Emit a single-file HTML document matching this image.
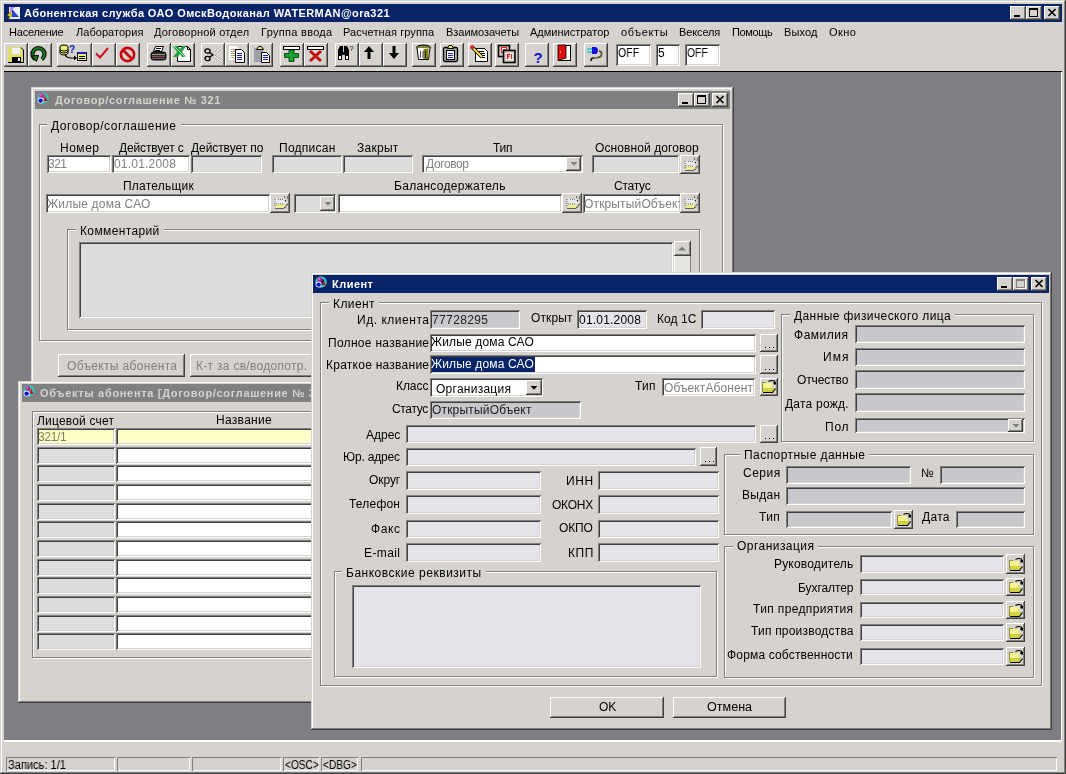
<!DOCTYPE html>
<html><head><meta charset="utf-8"><style>
html,body{margin:0;padding:0;}
body{width:1066px;height:774px;position:relative;overflow:hidden;background:#d6d3ce;font-family:"Liberation Sans",sans-serif;}
body>div,body>svg,body>span{position:absolute;}
.t{white-space:pre;display:block;-webkit-font-smoothing:antialiased;will-change:transform;}
svg{overflow:visible;}
</style></head><body>
<div style="left:0px;top:0px;width:1066px;height:774px;background:#d6d3ce;box-shadow:inset -1px -1px #404040,inset 1px 1px #d6d3ce,inset -2px -2px #808080,inset 2px 2px #ffffff;"></div>
<div style="left:4px;top:4px;width:1058px;height:18px;background:#0a246a;"></div>
<svg style="left:6px;top:6px" width="14" height="14" viewBox="0 0 14 14"><rect x="3" y="1" width="11" height="12" fill="#e8f0ff"/><path d="M6 3 L13 11 H6 Z" fill="#2040e0"/><path d="M4 1 L9 1 L4 6 Z" fill="#c080ff"/><path d="M4 6 L1 10 H4 L2 14 L7 8 H4 L6 5 Z" fill="#f0e020" stroke="#604000" stroke-width="0.5"/></svg>
<span class="t " style="left:23.50px;top:7px;font-size:11px;line-height:12px;color:#fff;letter-spacing:0.406px;font-weight:bold;">Абонентская служба ОАО ОмскВодоканал WATERMAN@ora321</span>
<div style="left:1010px;top:6px;width:16px;height:14px;background:#d6d3ce;box-shadow:inset -1px -1px #404040,inset 1px 1px #ffffff,inset -2px -2px #808080,inset 2px 2px #d6d3ce;"></div>
<div style="left:1014px;top:15px;width:6px;height:2px;background:#000;"></div>
<div style="left:1026px;top:6px;width:16px;height:14px;background:#d6d3ce;box-shadow:inset -1px -1px #404040,inset 1px 1px #ffffff,inset -2px -2px #808080,inset 2px 2px #d6d3ce;"></div>
<div style="left:1029px;top:8px;width:9px;height:9px;border:1px solid #000;border-top-width:2px;box-sizing:border-box;"></div>
<div style="left:1044px;top:6px;width:16px;height:14px;background:#d6d3ce;box-shadow:inset -1px -1px #404040,inset 1px 1px #ffffff,inset -2px -2px #808080,inset 2px 2px #d6d3ce;"></div>
<svg style="left:1048px;top:9px" width="8" height="7" viewBox="0 0 8 7"><path d="M0.5 0 L7.5 7 M7.5 0 L0.5 7" stroke="#000" stroke-width="1.6"/></svg>
<span class="t " style="left:8.80px;top:26px;font-size:11px;line-height:12px;color:#000;letter-spacing:-0.190px;">Население</span>
<span class="t " style="left:75.50px;top:26px;font-size:11px;line-height:12px;color:#000;letter-spacing:0.037px;">Лаборатория</span>
<span class="t " style="left:154.30px;top:26px;font-size:11px;line-height:12px;color:#000;letter-spacing:0.203px;">Договорной отдел</span>
<span class="t " style="left:260.80px;top:26px;font-size:11px;line-height:12px;color:#000;letter-spacing:0.298px;">Группа ввода</span>
<span class="t " style="left:342.90px;top:26px;font-size:11px;line-height:12px;color:#000;letter-spacing:0.095px;">Расчетная группа</span>
<span class="t " style="left:445.70px;top:26px;font-size:11px;line-height:12px;color:#000;letter-spacing:-0.036px;">Взаимозачеты</span>
<span class="t " style="left:530.30px;top:26px;font-size:11px;line-height:12px;color:#000;letter-spacing:0.001px;">Администратор</span>
<span class="t " style="left:621.20px;top:26px;font-size:11px;line-height:12px;color:#000;letter-spacing:0.610px;">объекты</span>
<span class="t " style="left:679.00px;top:26px;font-size:11px;line-height:12px;color:#000;letter-spacing:-0.124px;">Векселя</span>
<span class="t " style="left:731.90px;top:26px;font-size:11px;line-height:12px;color:#000;letter-spacing:-0.340px;">Помощь</span>
<span class="t " style="left:783.90px;top:26px;font-size:11px;line-height:12px;color:#000;letter-spacing:0.116px;">Выход</span>
<span class="t " style="left:828.50px;top:26px;font-size:11px;line-height:12px;color:#000;letter-spacing:0.474px;">Окно</span>
<div style="left:4px;top:43px;width:24px;height:24px;background:#d6d3ce;box-shadow:inset -1px -1px #404040,inset 1px 1px #ffffff,inset -2px -2px #808080,inset 2px 2px #d6d3ce;"></div>
<div style="left:28px;top:43px;width:24px;height:24px;background:#d6d3ce;box-shadow:inset -1px -1px #404040,inset 1px 1px #ffffff,inset -2px -2px #808080,inset 2px 2px #d6d3ce;"></div>
<div style="left:57px;top:43px;width:35px;height:24px;background:#d6d3ce;box-shadow:inset -1px -1px #404040,inset 1px 1px #ffffff,inset -2px -2px #808080,inset 2px 2px #d6d3ce;"></div>
<div style="left:92px;top:43px;width:24px;height:24px;background:#d6d3ce;box-shadow:inset -1px -1px #404040,inset 1px 1px #ffffff,inset -2px -2px #808080,inset 2px 2px #d6d3ce;"></div>
<div style="left:116px;top:43px;width:24px;height:24px;background:#d6d3ce;box-shadow:inset -1px -1px #404040,inset 1px 1px #ffffff,inset -2px -2px #808080,inset 2px 2px #d6d3ce;"></div>
<div style="left:147px;top:43px;width:24px;height:24px;background:#d6d3ce;box-shadow:inset -1px -1px #404040,inset 1px 1px #ffffff,inset -2px -2px #808080,inset 2px 2px #d6d3ce;"></div>
<div style="left:171px;top:43px;width:24px;height:24px;background:#d6d3ce;box-shadow:inset -1px -1px #404040,inset 1px 1px #ffffff,inset -2px -2px #808080,inset 2px 2px #d6d3ce;"></div>
<div style="left:201px;top:43px;width:24px;height:24px;background:#d6d3ce;box-shadow:inset -1px -1px #404040,inset 1px 1px #ffffff,inset -2px -2px #808080,inset 2px 2px #d6d3ce;"></div>
<div style="left:225px;top:43px;width:24px;height:24px;background:#d6d3ce;box-shadow:inset -1px -1px #404040,inset 1px 1px #ffffff,inset -2px -2px #808080,inset 2px 2px #d6d3ce;"></div>
<div style="left:249px;top:43px;width:24px;height:24px;background:#d6d3ce;box-shadow:inset -1px -1px #404040,inset 1px 1px #ffffff,inset -2px -2px #808080,inset 2px 2px #d6d3ce;"></div>
<div style="left:280px;top:43px;width:24px;height:24px;background:#d6d3ce;box-shadow:inset -1px -1px #404040,inset 1px 1px #ffffff,inset -2px -2px #808080,inset 2px 2px #d6d3ce;"></div>
<div style="left:304px;top:43px;width:24px;height:24px;background:#d6d3ce;box-shadow:inset -1px -1px #404040,inset 1px 1px #ffffff,inset -2px -2px #808080,inset 2px 2px #d6d3ce;"></div>
<div style="left:335px;top:43px;width:24px;height:24px;background:#d6d3ce;box-shadow:inset -1px -1px #404040,inset 1px 1px #ffffff,inset -2px -2px #808080,inset 2px 2px #d6d3ce;"></div>
<div style="left:359px;top:43px;width:24px;height:24px;background:#d6d3ce;box-shadow:inset -1px -1px #404040,inset 1px 1px #ffffff,inset -2px -2px #808080,inset 2px 2px #d6d3ce;"></div>
<div style="left:383px;top:43px;width:24px;height:24px;background:#d6d3ce;box-shadow:inset -1px -1px #404040,inset 1px 1px #ffffff,inset -2px -2px #808080,inset 2px 2px #d6d3ce;"></div>
<div style="left:412px;top:43px;width:24px;height:24px;background:#d6d3ce;box-shadow:inset -1px -1px #404040,inset 1px 1px #ffffff,inset -2px -2px #808080,inset 2px 2px #d6d3ce;"></div>
<div style="left:440px;top:43px;width:24px;height:24px;background:#d6d3ce;box-shadow:inset -1px -1px #404040,inset 1px 1px #ffffff,inset -2px -2px #808080,inset 2px 2px #d6d3ce;"></div>
<div style="left:468px;top:43px;width:24px;height:24px;background:#d6d3ce;box-shadow:inset -1px -1px #404040,inset 1px 1px #ffffff,inset -2px -2px #808080,inset 2px 2px #d6d3ce;"></div>
<div style="left:495px;top:43px;width:24px;height:24px;background:#d6d3ce;box-shadow:inset -1px -1px #404040,inset 1px 1px #ffffff,inset -2px -2px #808080,inset 2px 2px #d6d3ce;"></div>
<div style="left:525px;top:43px;width:24px;height:24px;background:#d6d3ce;box-shadow:inset -1px -1px #404040,inset 1px 1px #ffffff,inset -2px -2px #808080,inset 2px 2px #d6d3ce;"></div>
<div style="left:553px;top:43px;width:24px;height:24px;background:#d6d3ce;box-shadow:inset -1px -1px #404040,inset 1px 1px #ffffff,inset -2px -2px #808080,inset 2px 2px #d6d3ce;"></div>
<div style="left:584px;top:43px;width:24px;height:24px;background:#d6d3ce;box-shadow:inset -1px -1px #404040,inset 1px 1px #ffffff,inset -2px -2px #808080,inset 2px 2px #d6d3ce;"></div>
<svg style="left:8px;top:47px" width="16" height="16" viewBox="0 0 16 16"><path d="M0 0 H13 L16 3 V16 H0 Z" fill="#dede6a"/><path d="M13 0.5 L15.5 3 V15.5 H0" fill="none" stroke="#000" stroke-width="1"/><rect x="4" y="1" width="8" height="6" fill="#f4f0f8"/><rect x="4" y="10" width="9" height="6" fill="#000"/><rect x="10" y="11" width="2" height="3" fill="#fff"/></svg>
<svg style="left:30px;top:45px" width="17" height="17" viewBox="0 0 17 17"><path d="M5.2 14.2 A6 6 0 1 1 11.8 14.2" fill="none" stroke="#000" stroke-width="4.2"/><path d="M5.2 14.2 A6 6 0 1 1 11.8 14.2" fill="none" stroke="#1a7a1a" stroke-width="2.2"/><path d="M1.5 11 L6.5 16.5 L8.5 10.5 Z" fill="#1a7a1a" stroke="#000" stroke-width="1"/></svg>
<svg style="left:59px;top:44px" width="30" height="18" viewBox="0 0 30 18"><ellipse cx="5" cy="3" rx="4" ry="2" fill="#f0f070" stroke="#000"/><path d="M1 3 V9 A4 2 0 0 0 9 9 V3" fill="#f0f070" stroke="#000"/><path d="M1 5 A4 2 0 0 0 9 5 M1 7 A4 2 0 0 0 9 7" fill="none" stroke="#000"/><text x="10" y="9" font-size="10" font-family="Liberation Sans" font-weight="bold" fill="#2020c0">?</text><path d="M6 11 Q8 14 12 14 H16" fill="none" stroke="#000" stroke-width="1.2"/><path d="M15 11.5 L18 14 L15 16.5 Z" fill="#000"/><rect x="18.5" y="8.5" width="9" height="8" fill="#f0f070" stroke="#000"/><rect x="18.5" y="8" width="9" height="2" fill="#2020c0"/><path d="M20 12.5 H26 M20 14.5 H26" stroke="#000"/></svg>
<svg style="left:95px;top:47px" width="14" height="12" viewBox="0 0 14 12"><path d="M1 6.5 L5 10.5 L13 1" fill="none" stroke="#d01020" stroke-width="2"/></svg>
<svg style="left:119px;top:46px" width="17" height="17" viewBox="0 0 17 17"><circle cx="8.5" cy="8.5" r="6.6" fill="none" stroke="#c80010" stroke-width="2.6"/><path d="M4 4 L13 13" stroke="#c80010" stroke-width="2.6"/></svg>
<svg style="left:150px;top:46px" width="17" height="16" viewBox="0 0 17 16"><path d="M5.5 0.5 H13.5 L11.5 5.5 H3.5 Z" fill="#fff" stroke="#000"/><path d="M6 2.5 H11 M5 4.5 H10" stroke="#000" stroke-width="1"/><rect x="1" y="6" width="15" height="8" rx="2.5" fill="#303030" stroke="#000" stroke-width="1"/><path d="M2 8.5 H15" stroke="#909090" stroke-width="1"/><path d="M2 10.5 H15" stroke="#a04040" stroke-width="1"/><path d="M2 12.5 H15" stroke="#606060" stroke-width="1"/></svg>
<svg style="left:173px;top:45px" width="19" height="18" viewBox="0 0 19 18"><path d="M4.5 1.5 H14.5 L17.5 4.5 V16.5 H4.5 Z" fill="#fff" stroke="#000"/><path d="M14.5 1.5 V4.5 H17.5" fill="none" stroke="#000"/><path d="M0 1 H5 L7 4 L9 1 H13 L9 7 L13 12 H9 L7 9 L5 12 H0 L4 7 Z" fill="#22a040"/><path d="M1 1 L12 12" stroke="#c8f0c8" stroke-width="0.8"/></svg>
<svg style="left:203px;top:46px" width="20" height="17" viewBox="0 0 20 17"><path d="M10 9 L19 1 M10 9 L19 16" stroke="#808080" stroke-width="2.2"/><path d="M10 9 L19 1 M10 9 L19 16" stroke="#fff" stroke-width="1.2"/><ellipse cx="4.5" cy="5" rx="2.6" ry="2.2" fill="#d4d0c8" stroke="#000" stroke-width="1.3"/><ellipse cx="4.5" cy="12.5" rx="2.6" ry="2.2" fill="#d4d0c8" stroke="#000" stroke-width="1.3"/><path d="M6.5 6.5 L10 9 L6.5 11" fill="none" stroke="#000" stroke-width="1.3"/></svg>
<svg style="left:228px;top:46px" width="18" height="18" viewBox="0 0 18 18"><path d="M1 0 H8 L11 3 V14 H1 Z" fill="#fff"/><path d="M3 3.5 H8 M3 5.5 H8 M3 7.5 H8 M3 9.5 H8 M3 11.5 H6" stroke="#9a9a88" stroke-width="1"/><path d="M7.5 3.5 H13.5 L16.5 6.5 V16.5 H7.5 Z" fill="#fff" stroke="#000"/><path d="M9 7.5 H14 M9 9.5 H14 M9 11.5 H14 M9 13.5 H14" stroke="#1818b0" stroke-width="1"/></svg>
<svg style="left:253px;top:45px" width="18" height="19" viewBox="0 0 18 19"><rect x="1" y="3" width="9" height="14" fill="#a0a0a8"/><path d="M3.5 4.5 L5.5 1.5 H8.5 L10.5 4.5 Z" fill="#f0f070" stroke="#000" stroke-width="1"/><path d="M8.5 7.5 H13.5 L16.5 10.5 V17.5 H8.5 Z" fill="#fff" stroke="#000"/><path d="M10 10.5 H15 M10 12.5 H15 M10 14.5 H15" stroke="#1818b0" stroke-width="1"/></svg>
<svg style="left:283px;top:46px" width="17" height="16" viewBox="0 0 17 16"><rect x="0.5" y="0.5" width="16" height="3" fill="#fff" stroke="#000"/><path d="M6 4 H11 V7.5 H15.5 V11.5 H11 V15.5 H6 V11.5 H1.5 V7.5 H6 Z" fill="#18a030" stroke="#003000" stroke-width="0.8"/></svg>
<svg style="left:307px;top:46px" width="17" height="16" viewBox="0 0 17 16"><rect x="0.5" y="0.5" width="16" height="3" fill="#fff" stroke="#000"/><path d="M3 5 L14 15 M14 5 L3 15" stroke="#c01010" stroke-width="3"/></svg>
<svg style="left:337px;top:45px" width="18" height="16" viewBox="0 0 18 16"><path d="M1 5 L3 1 H6 V7 H7 V1 H10 L12 5 V15 H8 V10 H5 V15 H1 Z" fill="#000"/><rect x="2" y="11" width="2" height="3" fill="#fff"/><rect x="9" y="11" width="2" height="3" fill="#fff"/><text x="12.5" y="6" font-size="7" font-family="Liberation Sans" fill="#000">?</text></svg>
<svg style="left:363px;top:46px" width="12" height="14" viewBox="0 0 12 14"><path d="M6 0 L11 6 H7.5 V13 H4.5 V6 H1 Z" fill="#000"/></svg>
<svg style="left:388px;top:46px" width="12" height="14" viewBox="0 0 12 14"><path d="M6 13 L11 7 H7.5 V0 H4.5 V7 H1 Z" fill="#000"/></svg>
<svg style="left:415px;top:44px" width="17" height="17" viewBox="0 0 17 17"><ellipse cx="8.5" cy="3.5" rx="7" ry="2.5" fill="#808040" stroke="#000"/><path d="M2 4 L3.5 15.5 H13.5 L15 4" fill="#fff" stroke="#000"/><path d="M8.5 5 L13.5 4.5 L13 15 H8.5 Z" fill="#808000"/><path d="M5.5 7 V14 M8 7 V14 M10.5 7 V14" stroke="#000" stroke-width="0.7"/></svg>
<svg style="left:443px;top:45px" width="16" height="17" viewBox="0 0 16 17"><rect x="0.5" y="2.5" width="14" height="14" rx="1.5" fill="#a8a8a8" stroke="#000" stroke-width="1.3"/><rect x="3.5" y="5.5" width="8" height="9" fill="#fff" stroke="#000" stroke-width="1"/><path d="M4.5 3.5 L6 0.5 H9 L10.5 3.5 Z" fill="#f0f070" stroke="#000" stroke-width="1"/><path d="M5 8.5 H10 M5 10.5 H10 M5 12.5 H10" stroke="#2020c0" stroke-width="1"/></svg>
<svg style="left:470px;top:45px" width="19" height="18" viewBox="0 0 19 18"><path d="M5.5 3.5 H14.5 L17.5 6.5 V16.5 H5.5 Z" fill="#fff" stroke="#000"/><path d="M9 6.5 H14 M9 8.5 H15 M10 10.5 H15 M11 12.5 H15" stroke="#000" stroke-width="1"/><path d="M2 2 L12 12" stroke="#000" stroke-width="3.6"/><path d="M2 2 L12 12" stroke="#f0e040" stroke-width="2"/><circle cx="2.2" cy="2.2" r="2" fill="#d02020"/></svg>
<svg style="left:498px;top:45px" width="18" height="18" viewBox="0 0 18 18"><rect x="0.5" y="0.5" width="11" height="11" fill="#d4d0c8" stroke="#000" stroke-width="1.6"/><rect x="3" y="2" width="6" height="6" fill="#e02020"/><path d="M4.5 3 V7 M4.5 3.5 H8 M4.5 5.5 H7" stroke="#fff" stroke-width="1"/><rect x="5.5" y="5.5" width="11.5" height="12" fill="#d4d0c8" stroke="#000" stroke-width="1.6"/><rect x="8" y="8" width="7" height="7" fill="#f4f4f4"/><path d="M9.5 9 V14 M9.5 9.5 H12 M9.5 11.5 H11.5 M13.5 9 V14" stroke="#d02020" stroke-width="1.3"/></svg>
<svg style="left:533px;top:49px" width="12" height="15" viewBox="0 0 12 15"><text x="0.5" y="13.5" font-size="15" font-weight="bold" font-family="Liberation Sans" fill="#1010d0">?</text></svg>
<svg style="left:556px;top:45px" width="16" height="16" viewBox="0 0 16 16"><rect x="3.5" y="0.5" width="11" height="15" fill="#fff" stroke="#000"/><path d="M2 0 H10 V13 L2 15.5 Z" fill="#e01010" stroke="#000" stroke-width="0.8"/><rect x="4" y="6" width="1" height="2" fill="#ff8080"/></svg>
<svg style="left:587px;top:45px" width="18" height="17" viewBox="0 0 18 17"><path d="M0 4 H5 M0 7 H5" stroke="#20c0d0" stroke-width="1.4"/><path d="M5 2 H9 A4 4 0 0 1 9 9 H5 Z" fill="#1010e0"/><path d="M12 6 Q16 7 14 11 Q12 13 6 13 Q4 13 4 16" fill="none" stroke="#000" stroke-width="1.6"/><path d="M12 6 Q16 7 14 11 Q12 13 6 13" fill="none" stroke="#e0d040" stroke-width="0.6"/></svg>
<div style="left:616px;top:44px;width:35px;height:22px;background:#ffffff;box-shadow:inset 1px 1px #808080,inset -1px -1px #ffffff,inset 2px 2px #404040,inset -2px -2px #d6d3ce;"></div>
<div style="left:656px;top:44px;width:24px;height:22px;background:#ffffff;box-shadow:inset 1px 1px #808080,inset -1px -1px #ffffff,inset 2px 2px #404040,inset -2px -2px #d6d3ce;"></div>
<div style="left:685px;top:44px;width:35px;height:22px;background:#ffffff;box-shadow:inset 1px 1px #808080,inset -1px -1px #ffffff,inset 2px 2px #404040,inset -2px -2px #d6d3ce;"></div>
<span class="t " style="left:617.70px;top:46px;font-size:12px;line-height:14px;color:#000;transform:scaleX(0.8789);transform-origin:0 0;">OFF</span>
<span class="t " style="left:658.40px;top:46px;font-size:12px;line-height:14px;color:#000;">5</span>
<span class="t " style="left:686.80px;top:46px;font-size:12px;line-height:14px;color:#000;transform:scaleX(0.8571);transform-origin:0 0;">OFF</span>
<div style="left:4px;top:71px;width:1058px;height:1px;background:#000;"></div>
<div style="left:4px;top:72px;width:1057px;height:668px;background:#807e83;"></div>
<div style="left:1061px;top:72px;width:1px;height:668px;background:#fff;"></div>
<div style="left:4px;top:740px;width:1058px;height:2px;background:#fff;"></div>
<div style="left:31px;top:87px;width:703px;height:300px;background:#d6d3ce;box-shadow:inset -1px -1px #404040,inset 1px 1px #d6d3ce,inset -2px -2px #808080,inset 2px 2px #ffffff;"></div>
<div style="left:35px;top:91px;width:695px;height:18px;background:#808080;"></div>
<svg style="left:37px;top:92px" width="12" height="12" viewBox="0 0 12 12"><circle cx="6" cy="6" r="4.6" fill="none" stroke="#38c4b4" stroke-width="2.4"/><circle cx="4.8" cy="3.6" r="2.4" fill="#c0209c"/><circle cx="4.2" cy="3" r="0.8" fill="#ffb0ff"/><path d="M8.2 4.5 L10.8 9 H7.2 Z" fill="#c00c20"/><circle cx="3.6" cy="8.6" r="3" fill="#e8f0ff"/><circle cx="3.6" cy="8.6" r="2.2" fill="#1010c8"/></svg>
<span class="t " style="left:55.00px;top:94px;font-size:11px;line-height:12px;color:#d6d3ce;letter-spacing:0.638px;font-weight:bold;">Договор/соглашение № 321</span>
<div style="left:678px;top:93px;width:16px;height:14px;background:#d6d3ce;box-shadow:inset -1px -1px #404040,inset 1px 1px #ffffff,inset -2px -2px #808080,inset 2px 2px #d6d3ce;"></div>
<div style="left:682px;top:102px;width:6px;height:2px;background:#000;"></div>
<div style="left:694px;top:93px;width:16px;height:14px;background:#d6d3ce;box-shadow:inset -1px -1px #404040,inset 1px 1px #ffffff,inset -2px -2px #808080,inset 2px 2px #d6d3ce;"></div>
<div style="left:697px;top:95px;width:9px;height:9px;border:1px solid #000;border-top-width:2px;box-sizing:border-box;"></div>
<div style="left:712px;top:93px;width:16px;height:14px;background:#d6d3ce;box-shadow:inset -1px -1px #404040,inset 1px 1px #ffffff,inset -2px -2px #808080,inset 2px 2px #d6d3ce;"></div>
<svg style="left:716px;top:96px" width="8" height="7" viewBox="0 0 8 7"><path d="M0.5 0 L7.5 7 M7.5 0 L0.5 7" stroke="#000" stroke-width="1.6"/></svg>
<div style="left:40px;top:125px;width:684px;height:217px;border:1px solid #ffffff;box-sizing:border-box;"></div>
<div style="left:39px;top:124px;width:684px;height:217px;border:1px solid #808080;box-sizing:border-box;"></div>
<span class="t " style="left:51.00px;top:119px;font-size:12px;line-height:14px;color:#000;letter-spacing:0.558px;background:#d6d3ce;padding:0 4px;margin-left:-4px;">Договор/соглашение</span>
<span class="t " style="left:59.90px;top:141px;font-size:12px;line-height:14px;color:#000;letter-spacing:0.516px;">Номер</span>
<span class="t " style="left:118.80px;top:141px;font-size:12px;line-height:14px;color:#000;letter-spacing:-0.128px;">Действует с</span>
<span class="t " style="left:190.50px;top:141px;font-size:12px;line-height:14px;color:#000;letter-spacing:-0.077px;">Действует по</span>
<span class="t " style="left:279.00px;top:141px;font-size:12px;line-height:14px;color:#000;letter-spacing:0.267px;">Подписан</span>
<span class="t " style="left:357.35px;top:141px;font-size:12px;line-height:14px;color:#000;letter-spacing:0.266px;">Закрыт</span>
<span class="t " style="left:492.80px;top:141px;font-size:12px;line-height:14px;color:#000;letter-spacing:-0.300px;">Тип</span>
<span class="t " style="left:595.15px;top:141px;font-size:12px;line-height:14px;color:#000;letter-spacing:0.089px;">Основной договор</span>
<div style="left:47px;top:155px;width:64px;height:18px;background:#ffffff;box-shadow:inset 1px 1px #808080,inset -1px -1px #ffffff,inset 2px 2px #404040,inset -2px -2px #d6d3ce;"></div>
<span class="t " style="left:48.20px;top:157px;font-size:12px;line-height:14px;color:#808080;letter-spacing:-0.508px;">321</span>
<div style="left:112px;top:155px;width:78px;height:18px;background:#ffffff;box-shadow:inset 1px 1px #808080,inset -1px -1px #ffffff,inset 2px 2px #404040,inset -2px -2px #d6d3ce;"></div>
<span class="t " style="left:114.10px;top:157px;font-size:12px;line-height:14px;color:#808080;letter-spacing:0.197px;">01.01.2008</span>
<div style="left:191px;top:155px;width:71px;height:18px;background:#dedddd;box-shadow:inset 1px 1px #808080,inset -1px -1px #ffffff,inset 2px 2px #404040,inset -2px -2px #d6d3ce;"></div>
<div style="left:272px;top:155px;width:70px;height:18px;background:#dedddd;box-shadow:inset 1px 1px #808080,inset -1px -1px #ffffff,inset 2px 2px #404040,inset -2px -2px #d6d3ce;"></div>
<div style="left:343px;top:155px;width:70px;height:18px;background:#dedddd;box-shadow:inset 1px 1px #808080,inset -1px -1px #ffffff,inset 2px 2px #404040,inset -2px -2px #d6d3ce;"></div>
<div style="left:422px;top:155px;width:161px;height:18px;background:#ffffff;box-shadow:inset 1px 1px #808080,inset -1px -1px #ffffff,inset 2px 2px #404040,inset -2px -2px #d6d3ce;"></div>
<span class="t " style="left:425.80px;top:157px;font-size:12px;line-height:14px;color:#808080;letter-spacing:-0.383px;">Договор</span>
<div style="left:566px;top:157px;width:15px;height:14px;background:#d6d3ce;box-shadow:inset -1px -1px #404040,inset 1px 1px #ffffff,inset -2px -2px #808080,inset 2px 2px #d6d3ce;"></div>
<svg style="left:569.5px;top:162.0px" width="8" height="4" viewBox="0 0 8 4"><path d="M0.5 0 H7.5 L4 3.8 Z" fill="#808080"/></svg>
<div style="left:592px;top:155px;width:87px;height:18px;background:#dedddd;box-shadow:inset 1px 1px #808080,inset -1px -1px #ffffff,inset 2px 2px #404040,inset -2px -2px #d6d3ce;"></div>
<div style="left:680px;top:155px;width:20px;height:19px;background:#d6d3ce;box-shadow:inset -1px -1px #404040,inset 1px 1px #ffffff,inset -2px -2px #808080,inset 2px 2px #d6d3ce;"></div>
<svg style="left:684px;top:158px" width="14" height="13" viewBox="0 0 14 13"><rect x="1" y="3" width="10" height="5" fill="#e8e6f0"/><path d="M2 8 H12 L10 12 H2 Z" fill="#ecec90"/><path d="M1.5 12.5 H10" stroke="#000" stroke-width="1.1" stroke-dasharray="1.1 0.9"/><path d="M10.5 12 L13.5 8" stroke="#000" stroke-width="1.1" stroke-dasharray="1.1 0.9"/><path d="M1 3 V11 M2 8 H9" stroke="#707060" stroke-width="1" stroke-dasharray="1 1"/><path d="M4 3.5 H9" stroke="#707080" stroke-width="1" stroke-dasharray="1 1"/><path d="M10 1 H14 M11 5 L13.5 2.5" stroke="#000" stroke-width="1.1" stroke-dasharray="1.1 2"/></svg>
<span class="t " style="left:122.65px;top:179px;font-size:12px;line-height:14px;color:#000;letter-spacing:0.217px;">Плательщик</span>
<span class="t " style="left:393.80px;top:179px;font-size:12px;line-height:14px;color:#000;letter-spacing:0.289px;">Балансодержатель</span>
<span class="t " style="left:613.95px;top:179px;font-size:12px;line-height:14px;color:#000;letter-spacing:-0.247px;">Статус</span>
<div style="left:46px;top:194px;width:224px;height:19px;background:#ffffff;box-shadow:inset 1px 1px #808080,inset -1px -1px #ffffff,inset 2px 2px #404040,inset -2px -2px #d6d3ce;"></div>
<span class="t " style="left:46.50px;top:197px;font-size:12px;line-height:14px;color:#808080;letter-spacing:0.200px;">Жилые дома САО</span>
<div style="left:270px;top:193px;width:20px;height:20px;background:#d6d3ce;box-shadow:inset -1px -1px #404040,inset 1px 1px #ffffff,inset -2px -2px #808080,inset 2px 2px #d6d3ce;"></div>
<svg style="left:274px;top:196px" width="14" height="13" viewBox="0 0 14 13"><rect x="1" y="3" width="10" height="5" fill="#e8e6f0"/><path d="M2 8 H12 L10 12 H2 Z" fill="#ecec90"/><path d="M1.5 12.5 H10" stroke="#000" stroke-width="1.1" stroke-dasharray="1.1 0.9"/><path d="M10.5 12 L13.5 8" stroke="#000" stroke-width="1.1" stroke-dasharray="1.1 0.9"/><path d="M1 3 V11 M2 8 H9" stroke="#707060" stroke-width="1" stroke-dasharray="1 1"/><path d="M4 3.5 H9" stroke="#707080" stroke-width="1" stroke-dasharray="1 1"/><path d="M10 1 H14 M11 5 L13.5 2.5" stroke="#000" stroke-width="1.1" stroke-dasharray="1.1 2"/></svg>
<div style="left:294px;top:194px;width:42px;height:19px;background:#dedddd;box-shadow:inset 1px 1px #808080,inset -1px -1px #ffffff,inset 2px 2px #404040,inset -2px -2px #d6d3ce;"></div>
<div style="left:320px;top:196px;width:15px;height:15px;background:#d6d3ce;box-shadow:inset -1px -1px #404040,inset 1px 1px #ffffff,inset -2px -2px #808080,inset 2px 2px #d6d3ce;"></div>
<svg style="left:323.5px;top:201.5px" width="8" height="4" viewBox="0 0 8 4"><path d="M0.5 0 H7.5 L4 3.8 Z" fill="#808080"/></svg>
<div style="left:338px;top:194px;width:224px;height:19px;background:#ffffff;box-shadow:inset 1px 1px #808080,inset -1px -1px #ffffff,inset 2px 2px #404040,inset -2px -2px #d6d3ce;"></div>
<div style="left:562px;top:193px;width:20px;height:20px;background:#d6d3ce;box-shadow:inset -1px -1px #404040,inset 1px 1px #ffffff,inset -2px -2px #808080,inset 2px 2px #d6d3ce;"></div>
<svg style="left:566px;top:196px" width="14" height="13" viewBox="0 0 14 13"><rect x="1" y="3" width="10" height="5" fill="#e8e6f0"/><path d="M2 8 H12 L10 12 H2 Z" fill="#ecec90"/><path d="M1.5 12.5 H10" stroke="#000" stroke-width="1.1" stroke-dasharray="1.1 0.9"/><path d="M10.5 12 L13.5 8" stroke="#000" stroke-width="1.1" stroke-dasharray="1.1 0.9"/><path d="M1 3 V11 M2 8 H9" stroke="#707060" stroke-width="1" stroke-dasharray="1 1"/><path d="M4 3.5 H9" stroke="#707080" stroke-width="1" stroke-dasharray="1 1"/><path d="M10 1 H14 M11 5 L13.5 2.5" stroke="#000" stroke-width="1.1" stroke-dasharray="1.1 2"/></svg>
<div style="left:583px;top:194px;width:98px;height:19px;background:#ffffff;box-shadow:inset 1px 1px #808080,inset -1px -1px #ffffff,inset 2px 2px #404040,inset -2px -2px #d6d3ce;"></div>
<span class="t " style="left:584.10px;top:197px;font-size:12px;line-height:14px;color:#808080;letter-spacing:0.148px;">ОткрытыйОбъект</span>
<div style="left:680px;top:193px;width:20px;height:20px;background:#d6d3ce;box-shadow:inset -1px -1px #404040,inset 1px 1px #ffffff,inset -2px -2px #808080,inset 2px 2px #d6d3ce;"></div>
<svg style="left:684px;top:196px" width="14" height="13" viewBox="0 0 14 13"><rect x="1" y="3" width="10" height="5" fill="#e8e6f0"/><path d="M2 8 H12 L10 12 H2 Z" fill="#ecec90"/><path d="M1.5 12.5 H10" stroke="#000" stroke-width="1.1" stroke-dasharray="1.1 0.9"/><path d="M10.5 12 L13.5 8" stroke="#000" stroke-width="1.1" stroke-dasharray="1.1 0.9"/><path d="M1 3 V11 M2 8 H9" stroke="#707060" stroke-width="1" stroke-dasharray="1 1"/><path d="M4 3.5 H9" stroke="#707080" stroke-width="1" stroke-dasharray="1 1"/><path d="M10 1 H14 M11 5 L13.5 2.5" stroke="#000" stroke-width="1.1" stroke-dasharray="1.1 2"/></svg>
<div style="left:68px;top:230px;width:633px;height:101px;border:1px solid #ffffff;box-sizing:border-box;"></div>
<div style="left:67px;top:229px;width:633px;height:101px;border:1px solid #808080;box-sizing:border-box;"></div>
<span class="t " style="left:80.20px;top:224px;font-size:12px;line-height:14px;color:#000;letter-spacing:0.374px;background:#d6d3ce;padding:0 4px;margin-left:-4px;">Комментарий</span>
<div style="left:79px;top:242px;width:594px;height:76px;background:#dedddd;box-shadow:inset 1px 1px #808080,inset -1px -1px #ffffff,inset 2px 2px #404040,inset -2px -2px #d6d3ce;"></div>
<div style="left:674px;top:241px;width:17px;height:15px;background:#d6d3ce;box-shadow:inset -1px -1px #404040,inset 1px 1px #ffffff,inset -2px -2px #808080,inset 2px 2px #d6d3ce;"></div>
<svg style="left:678px;top:246px" width="9" height="5" viewBox="0 0 9 5"><path d="M0 4.5 H8 L4 0.5 Z" fill="#808080"/></svg>
<div style="left:674px;top:256px;width:17px;height:62px;background:#e8e6e2;border-left:1px solid #fff;border-right:1px solid #808080;box-sizing:border-box;"></div>
<div style="left:58px;top:354px;width:127px;height:23px;background:#d6d3ce;box-shadow:inset -1px -1px #404040,inset 1px 1px #ffffff,inset -2px -2px #808080,inset 2px 2px #d6d3ce;"></div>
<span class="t " style="left:66.50px;top:359px;font-size:12px;line-height:14px;color:#808080;letter-spacing:0.333px;">Объекты абонента</span>
<div style="left:190px;top:354px;width:200px;height:23px;background:#d6d3ce;box-shadow:inset -1px -1px #404040,inset 1px 1px #ffffff,inset -2px -2px #808080,inset 2px 2px #d6d3ce;"></div>
<span class="t " style="left:196.10px;top:359px;font-size:12px;line-height:14px;color:#808080;letter-spacing:0.293px;">К-т за св/водопотр.</span>
<div style="left:18px;top:381px;width:320px;height:322px;background:#d6d3ce;box-shadow:inset -1px -1px #404040,inset 1px 1px #d6d3ce,inset -2px -2px #808080,inset 2px 2px #ffffff;"></div>
<div style="left:22px;top:384px;width:300px;height:18px;background:#808080;"></div>
<svg style="left:23px;top:385px" width="12" height="12" viewBox="0 0 12 12"><circle cx="6" cy="6" r="4.6" fill="none" stroke="#38c4b4" stroke-width="2.4"/><circle cx="4.8" cy="3.6" r="2.4" fill="#c0209c"/><circle cx="4.2" cy="3" r="0.8" fill="#ffb0ff"/><path d="M8.2 4.5 L10.8 9 H7.2 Z" fill="#c00c20"/><circle cx="3.6" cy="8.6" r="3" fill="#e8f0ff"/><circle cx="3.6" cy="8.6" r="2.2" fill="#1010c8"/></svg>
<span class="t " style="left:40.00px;top:387px;font-size:11px;line-height:12px;color:#d6d3ce;letter-spacing:0.679px;font-weight:bold;">Объекты абонента [Договор/соглашение № 321]</span>
<div style="left:33px;top:412px;width:308px;height:247px;border:1px solid #ffffff;box-sizing:border-box;"></div>
<div style="left:32px;top:411px;width:308px;height:247px;border:1px solid #808080;box-sizing:border-box;"></div>
<span class="t " style="left:37.30px;top:414px;font-size:12px;line-height:14px;color:#000;letter-spacing:0.199px;">Лицевой счет</span>
<span class="t " style="left:216.15px;top:413px;font-size:12px;line-height:14px;color:#000;letter-spacing:0.299px;">Название</span>
<div style="left:37px;top:428px;width:78px;height:17px;background:#ffffc8;box-shadow:inset 1px 1px #808080,inset -1px -1px #ffffff,inset 2px 2px #404040,inset -2px -2px #d6d3ce;"></div>
<div style="left:116px;top:428px;width:210px;height:17px;background:#ffffc8;box-shadow:inset 1px 1px #808080,inset -1px -1px #ffffff,inset 2px 2px #404040,inset -2px -2px #d6d3ce;"></div>
<div style="left:37px;top:447px;width:78px;height:17px;background:#dedddd;box-shadow:inset 1px 1px #808080,inset -1px -1px #ffffff,inset 2px 2px #404040,inset -2px -2px #d6d3ce;"></div>
<div style="left:116px;top:447px;width:210px;height:17px;background:#ffffff;box-shadow:inset 1px 1px #808080,inset -1px -1px #ffffff,inset 2px 2px #404040,inset -2px -2px #d6d3ce;"></div>
<div style="left:37px;top:465px;width:78px;height:17px;background:#dedddd;box-shadow:inset 1px 1px #808080,inset -1px -1px #ffffff,inset 2px 2px #404040,inset -2px -2px #d6d3ce;"></div>
<div style="left:116px;top:465px;width:210px;height:17px;background:#ffffff;box-shadow:inset 1px 1px #808080,inset -1px -1px #ffffff,inset 2px 2px #404040,inset -2px -2px #d6d3ce;"></div>
<div style="left:37px;top:484px;width:78px;height:17px;background:#dedddd;box-shadow:inset 1px 1px #808080,inset -1px -1px #ffffff,inset 2px 2px #404040,inset -2px -2px #d6d3ce;"></div>
<div style="left:116px;top:484px;width:210px;height:17px;background:#ffffff;box-shadow:inset 1px 1px #808080,inset -1px -1px #ffffff,inset 2px 2px #404040,inset -2px -2px #d6d3ce;"></div>
<div style="left:37px;top:503px;width:78px;height:17px;background:#dedddd;box-shadow:inset 1px 1px #808080,inset -1px -1px #ffffff,inset 2px 2px #404040,inset -2px -2px #d6d3ce;"></div>
<div style="left:116px;top:503px;width:210px;height:17px;background:#ffffff;box-shadow:inset 1px 1px #808080,inset -1px -1px #ffffff,inset 2px 2px #404040,inset -2px -2px #d6d3ce;"></div>
<div style="left:37px;top:521px;width:78px;height:17px;background:#dedddd;box-shadow:inset 1px 1px #808080,inset -1px -1px #ffffff,inset 2px 2px #404040,inset -2px -2px #d6d3ce;"></div>
<div style="left:116px;top:521px;width:210px;height:17px;background:#ffffff;box-shadow:inset 1px 1px #808080,inset -1px -1px #ffffff,inset 2px 2px #404040,inset -2px -2px #d6d3ce;"></div>
<div style="left:37px;top:540px;width:78px;height:17px;background:#dedddd;box-shadow:inset 1px 1px #808080,inset -1px -1px #ffffff,inset 2px 2px #404040,inset -2px -2px #d6d3ce;"></div>
<div style="left:116px;top:540px;width:210px;height:17px;background:#ffffff;box-shadow:inset 1px 1px #808080,inset -1px -1px #ffffff,inset 2px 2px #404040,inset -2px -2px #d6d3ce;"></div>
<div style="left:37px;top:559px;width:78px;height:17px;background:#dedddd;box-shadow:inset 1px 1px #808080,inset -1px -1px #ffffff,inset 2px 2px #404040,inset -2px -2px #d6d3ce;"></div>
<div style="left:116px;top:559px;width:210px;height:17px;background:#ffffff;box-shadow:inset 1px 1px #808080,inset -1px -1px #ffffff,inset 2px 2px #404040,inset -2px -2px #d6d3ce;"></div>
<div style="left:37px;top:577px;width:78px;height:17px;background:#dedddd;box-shadow:inset 1px 1px #808080,inset -1px -1px #ffffff,inset 2px 2px #404040,inset -2px -2px #d6d3ce;"></div>
<div style="left:116px;top:577px;width:210px;height:17px;background:#ffffff;box-shadow:inset 1px 1px #808080,inset -1px -1px #ffffff,inset 2px 2px #404040,inset -2px -2px #d6d3ce;"></div>
<div style="left:37px;top:596px;width:78px;height:17px;background:#dedddd;box-shadow:inset 1px 1px #808080,inset -1px -1px #ffffff,inset 2px 2px #404040,inset -2px -2px #d6d3ce;"></div>
<div style="left:116px;top:596px;width:210px;height:17px;background:#ffffff;box-shadow:inset 1px 1px #808080,inset -1px -1px #ffffff,inset 2px 2px #404040,inset -2px -2px #d6d3ce;"></div>
<div style="left:37px;top:615px;width:78px;height:17px;background:#dedddd;box-shadow:inset 1px 1px #808080,inset -1px -1px #ffffff,inset 2px 2px #404040,inset -2px -2px #d6d3ce;"></div>
<div style="left:116px;top:615px;width:210px;height:17px;background:#ffffff;box-shadow:inset 1px 1px #808080,inset -1px -1px #ffffff,inset 2px 2px #404040,inset -2px -2px #d6d3ce;"></div>
<div style="left:37px;top:633px;width:78px;height:17px;background:#dedddd;box-shadow:inset 1px 1px #808080,inset -1px -1px #ffffff,inset 2px 2px #404040,inset -2px -2px #d6d3ce;"></div>
<div style="left:116px;top:633px;width:210px;height:17px;background:#ffffff;box-shadow:inset 1px 1px #808080,inset -1px -1px #ffffff,inset 2px 2px #404040,inset -2px -2px #d6d3ce;"></div>
<span class="t " style="left:38.30px;top:430px;font-size:12px;line-height:14px;color:#808060;letter-spacing:-0.329px;">321/1</span>
<div style="left:311px;top:272px;width:741px;height:458px;background:#d6d3ce;box-shadow:inset -1px -1px #404040,inset 1px 1px #d6d3ce,inset -2px -2px #808080,inset 2px 2px #ffffff;"></div>
<div style="left:313px;top:275px;width:736px;height:18px;background:#0a246a;"></div>
<svg style="left:315px;top:276px" width="12" height="12" viewBox="0 0 12 12"><circle cx="6" cy="6" r="4.6" fill="none" stroke="#38c4b4" stroke-width="2.4"/><circle cx="4.8" cy="3.6" r="2.4" fill="#c0209c"/><circle cx="4.2" cy="3" r="0.8" fill="#ffb0ff"/><path d="M8.2 4.5 L10.8 9 H7.2 Z" fill="#c00c20"/><circle cx="3.6" cy="8.6" r="3" fill="#e8f0ff"/><circle cx="3.6" cy="8.6" r="2.2" fill="#1010c8"/></svg>
<span class="t " style="left:332.20px;top:278px;font-size:11px;line-height:12px;color:#fff;letter-spacing:0.475px;font-weight:bold;">Клиент</span>
<div style="left:997px;top:277px;width:16px;height:14px;background:#d6d3ce;box-shadow:inset -1px -1px #404040,inset 1px 1px #ffffff,inset -2px -2px #808080,inset 2px 2px #d6d3ce;"></div>
<div style="left:1001px;top:286px;width:6px;height:2px;background:#000;"></div>
<div style="left:1013px;top:277px;width:16px;height:14px;background:#d6d3ce;box-shadow:inset -1px -1px #404040,inset 1px 1px #ffffff,inset -2px -2px #808080,inset 2px 2px #d6d3ce;"></div>
<div style="left:1016px;top:279px;width:9px;height:9px;border:1px solid #808080;border-top-width:2px;box-sizing:border-box;"></div>
<div style="left:1017px;top:280px;width:9px;height:9px;border:1px solid #ffffff;border-top:none;border-left:none;box-sizing:border-box;"></div>
<div style="left:1031px;top:277px;width:16px;height:14px;background:#d6d3ce;box-shadow:inset -1px -1px #404040,inset 1px 1px #ffffff,inset -2px -2px #808080,inset 2px 2px #d6d3ce;"></div>
<svg style="left:1035px;top:280px" width="8" height="7" viewBox="0 0 8 7"><path d="M0.5 0 L7.5 7 M7.5 0 L0.5 7" stroke="#000" stroke-width="1.6"/></svg>
<div style="left:321px;top:303px;width:722px;height:384px;border:1px solid #ffffff;box-sizing:border-box;"></div>
<div style="left:320px;top:302px;width:722px;height:384px;border:1px solid #808080;box-sizing:border-box;"></div>
<span class="t " style="left:332.50px;top:297px;font-size:12px;line-height:14px;color:#000;letter-spacing:0.403px;background:#d6d3ce;padding:0 4px;margin-left:-4px;">Клиент</span>
<span class="t " style="left:356.50px;top:313px;font-size:12px;line-height:14px;color:#000;letter-spacing:0.530px;">Ид. клиента</span>
<span class="t " style="left:327.50px;top:336px;font-size:12px;line-height:14px;color:#000;letter-spacing:0.294px;">Полное название</span>
<span class="t " style="left:325.50px;top:358px;font-size:12px;line-height:14px;color:#000;letter-spacing:0.254px;">Краткое название</span>
<span class="t " style="left:396.10px;top:379px;font-size:12px;line-height:14px;color:#000;letter-spacing:-0.064px;">Класс</span>
<span class="t " style="left:392.30px;top:402px;font-size:12px;line-height:14px;color:#000;letter-spacing:-0.347px;">Статус</span>
<div style="left:430px;top:310px;width:90px;height:19px;background:#c8c7cc;box-shadow:inset 1px 1px #808080,inset -1px -1px #ffffff,inset 2px 2px #404040,inset -2px -2px #d6d3ce;"></div>
<span class="t " style="left:432.20px;top:313px;font-size:12px;line-height:14px;color:#202020;letter-spacing:0.375px;">77728295</span>
<span class="t " style="left:531.00px;top:311px;font-size:12px;line-height:14px;color:#000;letter-spacing:0.125px;">Открыт</span>
<div style="left:577px;top:310px;width:70px;height:19px;background:#e6e4ea;box-shadow:inset 1px 1px #808080,inset -1px -1px #ffffff,inset 2px 2px #404040,inset -2px -2px #d6d3ce;"></div>
<span class="t " style="left:578.80px;top:313px;font-size:12px;line-height:14px;color:#000;letter-spacing:0.208px;">01.01.2008</span>
<span class="t " style="left:657.20px;top:312px;font-size:12px;line-height:14px;color:#000;letter-spacing:0.047px;">Код 1С</span>
<div style="left:701px;top:310px;width:74px;height:19px;background:#e6e4ea;box-shadow:inset 1px 1px #808080,inset -1px -1px #ffffff,inset 2px 2px #404040,inset -2px -2px #d6d3ce;"></div>
<div style="left:430px;top:334px;width:326px;height:18px;background:#ffffff;box-shadow:inset 1px 1px #808080,inset -1px -1px #ffffff,inset 2px 2px #404040,inset -2px -2px #d6d3ce;"></div>
<span class="t " style="left:431.00px;top:335px;font-size:12px;line-height:14px;color:#000;letter-spacing:0.146px;">Жилые дома САО</span>
<div style="left:760px;top:334px;width:18px;height:18px;background:#d6d3ce;box-shadow:inset -1px -1px #404040,inset 1px 1px #ffffff,inset -2px -2px #808080,inset 2px 2px #d6d3ce;"></div>
<div style="left:764.5px;top:346.5px;width:1.5px;height:1.5px;background:#000;"></div>
<div style="left:768.5px;top:346.5px;width:1.5px;height:1.5px;background:#000;"></div>
<div style="left:772.5px;top:346.5px;width:1.5px;height:1.5px;background:#000;"></div>
<div style="left:430px;top:355px;width:326px;height:19px;background:#ffffff;box-shadow:inset 1px 1px #808080,inset -1px -1px #ffffff,inset 2px 2px #404040,inset -2px -2px #d6d3ce;"></div>
<div style="left:432px;top:357px;width:103px;height:15px;background:#0a246a;"></div>
<span class="t " style="left:431.00px;top:357px;font-size:12px;line-height:14px;color:#fff;letter-spacing:0.146px;">Жилые дома САО</span>
<div style="left:760px;top:355px;width:18px;height:19px;background:#d6d3ce;box-shadow:inset -1px -1px #404040,inset 1px 1px #ffffff,inset -2px -2px #808080,inset 2px 2px #d6d3ce;"></div>
<div style="left:764.5px;top:368.5px;width:1.5px;height:1.5px;background:#000;"></div>
<div style="left:768.5px;top:368.5px;width:1.5px;height:1.5px;background:#000;"></div>
<div style="left:772.5px;top:368.5px;width:1.5px;height:1.5px;background:#000;"></div>
<div style="left:430px;top:378px;width:113px;height:19px;background:#ffffff;box-shadow:inset 1px 1px #808080,inset -1px -1px #ffffff,inset 2px 2px #404040,inset -2px -2px #d6d3ce;"></div>
<span class="t " style="left:436.00px;top:382px;font-size:12px;line-height:14px;color:#000;letter-spacing:0.254px;">Организация</span>
<div style="left:526px;top:380px;width:16px;height:15px;background:#d6d3ce;box-shadow:inset -1px -1px #404040,inset 1px 1px #ffffff,inset -2px -2px #808080,inset 2px 2px #d6d3ce;"></div>
<svg style="left:530.0px;top:385.5px" width="8" height="4" viewBox="0 0 8 4"><path d="M0.5 0 H7.5 L4 3.8 Z" fill="#000"/></svg>
<span class="t " style="left:635.10px;top:379px;font-size:12px;line-height:14px;color:#000;letter-spacing:0.200px;">Тип</span>
<div style="left:662px;top:378px;width:93px;height:18px;background:#ffffff;box-shadow:inset 1px 1px #808080,inset -1px -1px #ffffff,inset 2px 2px #404040,inset -2px -2px #d6d3ce;"></div>
<span class="t " style="left:664.00px;top:381px;font-size:12px;line-height:14px;color:#808080;letter-spacing:0.096px;">ОбъектАбонент</span>
<div style="left:760px;top:378px;width:18px;height:18px;background:#d6d3ce;box-shadow:inset -1px -1px #404040,inset 1px 1px #ffffff,inset -2px -2px #808080,inset 2px 2px #d6d3ce;"></div>
<svg style="left:762px;top:380px" width="14" height="13" viewBox="0 0 14 13"><rect x="0" y="3" width="10" height="6" fill="#f6f690"/><rect x="0" y="2" width="4" height="1" fill="#909040"/><rect x="0" y="3" width="1" height="9" fill="#909040"/><path d="M1 8 H13 L10.5 12 H1 Z" fill="#caca3a"/><path d="M2 9.5 H11 M2 11 H10" stroke="#f0f070" stroke-width="0.6" stroke-dasharray="1 1"/><rect x="1" y="12" width="10" height="1" fill="#000"/><path d="M10.5 12.5 L13.5 8.5" stroke="#000" stroke-width="1.1"/><path d="M6.5 1.5 Q9 -0.3 12.5 1 L13 3" stroke="#000" stroke-width="1.1" fill="none"/><rect x="11.5" y="2" width="2.5" height="2.5" fill="#000"/></svg>
<div style="left:430px;top:401px;width:151px;height:18px;background:#c8c7cc;box-shadow:inset 1px 1px #808080,inset -1px -1px #ffffff,inset 2px 2px #404040,inset -2px -2px #d6d3ce;"></div>
<span class="t " style="left:431.70px;top:403px;font-size:12px;line-height:14px;color:#202020;letter-spacing:0.179px;">ОткрытыйОбъект</span>
<span class="t " style="left:365.70px;top:428px;font-size:12px;line-height:14px;color:#000;letter-spacing:-0.011px;">Адрес</span>
<span class="t " style="left:343.00px;top:450px;font-size:12px;line-height:14px;color:#000;letter-spacing:-0.184px;">Юр. адрес</span>
<span class="t " style="left:368.80px;top:473px;font-size:12px;line-height:14px;color:#000;letter-spacing:-0.071px;">Округ</span>
<span class="t " style="left:349.00px;top:497px;font-size:12px;line-height:14px;color:#000;letter-spacing:0.203px;">Телефон</span>
<span class="t " style="left:371.00px;top:522px;font-size:12px;line-height:14px;color:#000;letter-spacing:0.604px;">Факс</span>
<span class="t " style="left:364.00px;top:546px;font-size:12px;line-height:14px;color:#000;letter-spacing:0.397px;">E-mail</span>
<div style="left:406px;top:425px;width:350px;height:18px;background:#e6e4ea;box-shadow:inset 1px 1px #808080,inset -1px -1px #ffffff,inset 2px 2px #404040,inset -2px -2px #d6d3ce;"></div>
<div style="left:760px;top:425px;width:18px;height:18px;background:#d6d3ce;box-shadow:inset -1px -1px #404040,inset 1px 1px #ffffff,inset -2px -2px #808080,inset 2px 2px #d6d3ce;"></div>
<div style="left:764.5px;top:437.5px;width:1.5px;height:1.5px;background:#000;"></div>
<div style="left:768.5px;top:437.5px;width:1.5px;height:1.5px;background:#000;"></div>
<div style="left:772.5px;top:437.5px;width:1.5px;height:1.5px;background:#000;"></div>
<div style="left:406px;top:448px;width:290px;height:18px;background:#e6e4ea;box-shadow:inset 1px 1px #808080,inset -1px -1px #ffffff,inset 2px 2px #404040,inset -2px -2px #d6d3ce;"></div>
<div style="left:700px;top:447px;width:17px;height:19px;background:#d6d3ce;box-shadow:inset -1px -1px #404040,inset 1px 1px #ffffff,inset -2px -2px #808080,inset 2px 2px #d6d3ce;"></div>
<div style="left:704.5px;top:460.5px;width:1.5px;height:1.5px;background:#000;"></div>
<div style="left:708.5px;top:460.5px;width:1.5px;height:1.5px;background:#000;"></div>
<div style="left:712.5px;top:460.5px;width:1.5px;height:1.5px;background:#000;"></div>
<div style="left:406px;top:471px;width:135px;height:19px;background:#e6e4ea;box-shadow:inset 1px 1px #808080,inset -1px -1px #ffffff,inset 2px 2px #404040,inset -2px -2px #d6d3ce;"></div>
<div style="left:406px;top:495px;width:135px;height:19px;background:#e6e4ea;box-shadow:inset 1px 1px #808080,inset -1px -1px #ffffff,inset 2px 2px #404040,inset -2px -2px #d6d3ce;"></div>
<div style="left:406px;top:520px;width:135px;height:18px;background:#e6e4ea;box-shadow:inset 1px 1px #808080,inset -1px -1px #ffffff,inset 2px 2px #404040,inset -2px -2px #d6d3ce;"></div>
<div style="left:406px;top:543px;width:135px;height:19px;background:#e6e4ea;box-shadow:inset 1px 1px #808080,inset -1px -1px #ffffff,inset 2px 2px #404040,inset -2px -2px #d6d3ce;"></div>
<span class="t " style="left:565.80px;top:474px;font-size:12px;line-height:14px;color:#000;letter-spacing:0.616px;">ИНН</span>
<span class="t " style="left:551.70px;top:498px;font-size:12px;line-height:14px;color:#000;letter-spacing:-0.218px;">ОКОНХ</span>
<span class="t " style="left:559.20px;top:521px;font-size:12px;line-height:14px;color:#000;letter-spacing:-0.155px;">ОКПО</span>
<span class="t " style="left:567.60px;top:546px;font-size:12px;line-height:14px;color:#000;letter-spacing:0.583px;">КПП</span>
<div style="left:598px;top:471px;width:121px;height:19px;background:#e6e4ea;box-shadow:inset 1px 1px #808080,inset -1px -1px #ffffff,inset 2px 2px #404040,inset -2px -2px #d6d3ce;"></div>
<div style="left:598px;top:495px;width:121px;height:19px;background:#e6e4ea;box-shadow:inset 1px 1px #808080,inset -1px -1px #ffffff,inset 2px 2px #404040,inset -2px -2px #d6d3ce;"></div>
<div style="left:598px;top:520px;width:121px;height:18px;background:#e6e4ea;box-shadow:inset 1px 1px #808080,inset -1px -1px #ffffff,inset 2px 2px #404040,inset -2px -2px #d6d3ce;"></div>
<div style="left:598px;top:543px;width:121px;height:19px;background:#e6e4ea;box-shadow:inset 1px 1px #808080,inset -1px -1px #ffffff,inset 2px 2px #404040,inset -2px -2px #d6d3ce;"></div>
<div style="left:782px;top:315px;width:253px;height:128px;border:1px solid #ffffff;box-sizing:border-box;"></div>
<div style="left:781px;top:314px;width:253px;height:128px;border:1px solid #808080;box-sizing:border-box;"></div>
<span class="t " style="left:793.50px;top:309px;font-size:12px;line-height:14px;color:#000;letter-spacing:0.405px;background:#d6d3ce;padding:0 4px;margin-left:-4px;">Данные физического лица</span>
<span class="t " style="left:794.20px;top:328px;font-size:12px;line-height:14px;color:#000;letter-spacing:0.508px;">Фамилия</span>
<span class="t " style="left:822.60px;top:350px;font-size:12px;line-height:14px;color:#000;letter-spacing:1.113px;">Имя</span>
<span class="t " style="left:796.80px;top:373px;font-size:12px;line-height:14px;color:#000;letter-spacing:-0.108px;">Отчество</span>
<span class="t " style="left:784.60px;top:397px;font-size:12px;line-height:14px;color:#000;letter-spacing:0.239px;">Дата рожд.</span>
<span class="t " style="left:824.60px;top:420px;font-size:12px;line-height:14px;color:#000;letter-spacing:0.784px;">Пол</span>
<div style="left:855px;top:325px;width:170px;height:18px;background:#c8c7cc;box-shadow:inset 1px 1px #808080,inset -1px -1px #ffffff,inset 2px 2px #404040,inset -2px -2px #d6d3ce;"></div>
<div style="left:855px;top:348px;width:170px;height:18px;background:#c8c7cc;box-shadow:inset 1px 1px #808080,inset -1px -1px #ffffff,inset 2px 2px #404040,inset -2px -2px #d6d3ce;"></div>
<div style="left:855px;top:370px;width:170px;height:19px;background:#c8c7cc;box-shadow:inset 1px 1px #808080,inset -1px -1px #ffffff,inset 2px 2px #404040,inset -2px -2px #d6d3ce;"></div>
<div style="left:855px;top:393px;width:170px;height:19px;background:#c8c7cc;box-shadow:inset 1px 1px #808080,inset -1px -1px #ffffff,inset 2px 2px #404040,inset -2px -2px #d6d3ce;"></div>
<div style="left:855px;top:418px;width:170px;height:15px;background:#c8c7cc;box-shadow:inset 1px 1px #808080,inset -1px -1px #ffffff,inset 2px 2px #404040,inset -2px -2px #d6d3ce;"></div>
<div style="left:1008px;top:419px;width:15px;height:13px;background:#d6d3ce;box-shadow:inset -1px -1px #404040,inset 1px 1px #ffffff,inset -2px -2px #808080,inset 2px 2px #d6d3ce;"></div>
<svg style="left:1011.5px;top:423.5px" width="8" height="4" viewBox="0 0 8 4"><path d="M0.5 0 H7.5 L4 3.8 Z" fill="#808080"/></svg>
<div style="left:725px;top:455px;width:310px;height:81px;border:1px solid #ffffff;box-sizing:border-box;"></div>
<div style="left:724px;top:454px;width:310px;height:81px;border:1px solid #808080;box-sizing:border-box;"></div>
<span class="t " style="left:743.50px;top:448px;font-size:12px;line-height:14px;color:#000;letter-spacing:0.447px;background:#d6d3ce;padding:0 4px;margin-left:-4px;">Паспортные данные</span>
<span class="t " style="left:742.70px;top:466px;font-size:12px;line-height:14px;color:#000;letter-spacing:0.495px;">Серия</span>
<span class="t " style="left:741.80px;top:488px;font-size:12px;line-height:14px;color:#000;letter-spacing:0.295px;">Выдан</span>
<span class="t " style="left:759.10px;top:510px;font-size:12px;line-height:14px;color:#000;letter-spacing:0.400px;">Тип</span>
<div style="left:786px;top:466px;width:125px;height:18px;background:#c8c7cc;box-shadow:inset 1px 1px #808080,inset -1px -1px #ffffff,inset 2px 2px #404040,inset -2px -2px #d6d3ce;"></div>
<span class="t " style="left:920.50px;top:466px;font-size:12px;line-height:14px;color:#000;">№</span>
<div style="left:940px;top:466px;width:85px;height:18px;background:#c8c7cc;box-shadow:inset 1px 1px #808080,inset -1px -1px #ffffff,inset 2px 2px #404040,inset -2px -2px #d6d3ce;"></div>
<div style="left:786px;top:487px;width:239px;height:18px;background:#c8c7cc;box-shadow:inset 1px 1px #808080,inset -1px -1px #ffffff,inset 2px 2px #404040,inset -2px -2px #d6d3ce;"></div>
<div style="left:786px;top:511px;width:106px;height:17px;background:#c8c7cc;box-shadow:inset 1px 1px #808080,inset -1px -1px #ffffff,inset 2px 2px #404040,inset -2px -2px #d6d3ce;"></div>
<div style="left:894px;top:510px;width:19px;height:19px;background:#d6d3ce;box-shadow:inset -1px -1px #404040,inset 1px 1px #ffffff,inset -2px -2px #808080,inset 2px 2px #d6d3ce;"></div>
<svg style="left:897px;top:513px" width="14" height="13" viewBox="0 0 14 13"><rect x="0" y="3" width="10" height="6" fill="#f6f690"/><rect x="0" y="2" width="4" height="1" fill="#909040"/><rect x="0" y="3" width="1" height="9" fill="#909040"/><path d="M1 8 H13 L10.5 12 H1 Z" fill="#caca3a"/><path d="M2 9.5 H11 M2 11 H10" stroke="#f0f070" stroke-width="0.6" stroke-dasharray="1 1"/><rect x="1" y="12" width="10" height="1" fill="#000"/><path d="M10.5 12.5 L13.5 8.5" stroke="#000" stroke-width="1.1"/><path d="M6.5 1.5 Q9 -0.3 12.5 1 L13 3" stroke="#000" stroke-width="1.1" fill="none"/><rect x="11.5" y="2" width="2.5" height="2.5" fill="#000"/></svg>
<span class="t " style="left:921.50px;top:510px;font-size:12px;line-height:14px;color:#000;letter-spacing:0.312px;">Дата</span>
<div style="left:956px;top:511px;width:69px;height:17px;background:#c8c7cc;box-shadow:inset 1px 1px #808080,inset -1px -1px #ffffff,inset 2px 2px #404040,inset -2px -2px #d6d3ce;"></div>
<div style="left:725px;top:547px;width:310px;height:132px;border:1px solid #ffffff;box-sizing:border-box;"></div>
<div style="left:724px;top:546px;width:310px;height:132px;border:1px solid #808080;box-sizing:border-box;"></div>
<span class="t " style="left:736.50px;top:539px;font-size:12px;line-height:14px;color:#000;letter-spacing:0.464px;background:#d6d3ce;padding:0 4px;margin-left:-4px;">Организация</span>
<span class="t " style="left:773.70px;top:557px;font-size:12px;line-height:14px;color:#000;letter-spacing:0.182px;">Руководитель</span>
<div style="left:860px;top:555px;width:144px;height:18px;background:#e6e4ea;box-shadow:inset 1px 1px #808080,inset -1px -1px #ffffff,inset 2px 2px #404040,inset -2px -2px #d6d3ce;"></div>
<div style="left:1006px;top:554px;width:19px;height:20px;background:#d6d3ce;box-shadow:inset -1px -1px #404040,inset 1px 1px #ffffff,inset -2px -2px #808080,inset 2px 2px #d6d3ce;"></div>
<svg style="left:1009px;top:558px" width="14" height="13" viewBox="0 0 14 13"><rect x="0" y="3" width="10" height="6" fill="#f6f690"/><rect x="0" y="2" width="4" height="1" fill="#909040"/><rect x="0" y="3" width="1" height="9" fill="#909040"/><path d="M1 8 H13 L10.5 12 H1 Z" fill="#caca3a"/><path d="M2 9.5 H11 M2 11 H10" stroke="#f0f070" stroke-width="0.6" stroke-dasharray="1 1"/><rect x="1" y="12" width="10" height="1" fill="#000"/><path d="M10.5 12.5 L13.5 8.5" stroke="#000" stroke-width="1.1"/><path d="M6.5 1.5 Q9 -0.3 12.5 1 L13 3" stroke="#000" stroke-width="1.1" fill="none"/><rect x="11.5" y="2" width="2.5" height="2.5" fill="#000"/></svg>
<span class="t " style="left:797.50px;top:581px;font-size:12px;line-height:14px;color:#000;letter-spacing:-0.074px;">Бухгалтер</span>
<div style="left:860px;top:579px;width:144px;height:16px;background:#e6e4ea;box-shadow:inset 1px 1px #808080,inset -1px -1px #ffffff,inset 2px 2px #404040,inset -2px -2px #d6d3ce;"></div>
<div style="left:1006px;top:578px;width:19px;height:18px;background:#d6d3ce;box-shadow:inset -1px -1px #404040,inset 1px 1px #ffffff,inset -2px -2px #808080,inset 2px 2px #d6d3ce;"></div>
<svg style="left:1009px;top:580px" width="14" height="13" viewBox="0 0 14 13"><rect x="0" y="3" width="10" height="6" fill="#f6f690"/><rect x="0" y="2" width="4" height="1" fill="#909040"/><rect x="0" y="3" width="1" height="9" fill="#909040"/><path d="M1 8 H13 L10.5 12 H1 Z" fill="#caca3a"/><path d="M2 9.5 H11 M2 11 H10" stroke="#f0f070" stroke-width="0.6" stroke-dasharray="1 1"/><rect x="1" y="12" width="10" height="1" fill="#000"/><path d="M10.5 12.5 L13.5 8.5" stroke="#000" stroke-width="1.1"/><path d="M6.5 1.5 Q9 -0.3 12.5 1 L13 3" stroke="#000" stroke-width="1.1" fill="none"/><rect x="11.5" y="2" width="2.5" height="2.5" fill="#000"/></svg>
<span class="t " style="left:752.90px;top:602px;font-size:12px;line-height:14px;color:#000;letter-spacing:0.365px;">Тип предприятия</span>
<div style="left:860px;top:602px;width:144px;height:16px;background:#e6e4ea;box-shadow:inset 1px 1px #808080,inset -1px -1px #ffffff,inset 2px 2px #404040,inset -2px -2px #d6d3ce;"></div>
<div style="left:1006px;top:601px;width:19px;height:18px;background:#d6d3ce;box-shadow:inset -1px -1px #404040,inset 1px 1px #ffffff,inset -2px -2px #808080,inset 2px 2px #d6d3ce;"></div>
<svg style="left:1009px;top:604px" width="14" height="13" viewBox="0 0 14 13"><rect x="0" y="3" width="10" height="6" fill="#f6f690"/><rect x="0" y="2" width="4" height="1" fill="#909040"/><rect x="0" y="3" width="1" height="9" fill="#909040"/><path d="M1 8 H13 L10.5 12 H1 Z" fill="#caca3a"/><path d="M2 9.5 H11 M2 11 H10" stroke="#f0f070" stroke-width="0.6" stroke-dasharray="1 1"/><rect x="1" y="12" width="10" height="1" fill="#000"/><path d="M10.5 12.5 L13.5 8.5" stroke="#000" stroke-width="1.1"/><path d="M6.5 1.5 Q9 -0.3 12.5 1 L13 3" stroke="#000" stroke-width="1.1" fill="none"/><rect x="11.5" y="2" width="2.5" height="2.5" fill="#000"/></svg>
<span class="t " style="left:750.50px;top:624px;font-size:12px;line-height:14px;color:#000;letter-spacing:0.205px;">Тип производства</span>
<div style="left:860px;top:624px;width:144px;height:17px;background:#e6e4ea;box-shadow:inset 1px 1px #808080,inset -1px -1px #ffffff,inset 2px 2px #404040,inset -2px -2px #d6d3ce;"></div>
<div style="left:1006px;top:623px;width:19px;height:19px;background:#d6d3ce;box-shadow:inset -1px -1px #404040,inset 1px 1px #ffffff,inset -2px -2px #808080,inset 2px 2px #d6d3ce;"></div>
<svg style="left:1009px;top:626px" width="14" height="13" viewBox="0 0 14 13"><rect x="0" y="3" width="10" height="6" fill="#f6f690"/><rect x="0" y="2" width="4" height="1" fill="#909040"/><rect x="0" y="3" width="1" height="9" fill="#909040"/><path d="M1 8 H13 L10.5 12 H1 Z" fill="#caca3a"/><path d="M2 9.5 H11 M2 11 H10" stroke="#f0f070" stroke-width="0.6" stroke-dasharray="1 1"/><rect x="1" y="12" width="10" height="1" fill="#000"/><path d="M10.5 12.5 L13.5 8.5" stroke="#000" stroke-width="1.1"/><path d="M6.5 1.5 Q9 -0.3 12.5 1 L13 3" stroke="#000" stroke-width="1.1" fill="none"/><rect x="11.5" y="2" width="2.5" height="2.5" fill="#000"/></svg>
<span class="t " style="left:727.20px;top:648px;font-size:12px;line-height:14px;color:#000;letter-spacing:0.167px;">Форма собственности</span>
<div style="left:860px;top:648px;width:144px;height:17px;background:#e6e4ea;box-shadow:inset 1px 1px #808080,inset -1px -1px #ffffff,inset 2px 2px #404040,inset -2px -2px #d6d3ce;"></div>
<div style="left:1006px;top:647px;width:19px;height:19px;background:#d6d3ce;box-shadow:inset -1px -1px #404040,inset 1px 1px #ffffff,inset -2px -2px #808080,inset 2px 2px #d6d3ce;"></div>
<svg style="left:1009px;top:650px" width="14" height="13" viewBox="0 0 14 13"><rect x="0" y="3" width="10" height="6" fill="#f6f690"/><rect x="0" y="2" width="4" height="1" fill="#909040"/><rect x="0" y="3" width="1" height="9" fill="#909040"/><path d="M1 8 H13 L10.5 12 H1 Z" fill="#caca3a"/><path d="M2 9.5 H11 M2 11 H10" stroke="#f0f070" stroke-width="0.6" stroke-dasharray="1 1"/><rect x="1" y="12" width="10" height="1" fill="#000"/><path d="M10.5 12.5 L13.5 8.5" stroke="#000" stroke-width="1.1"/><path d="M6.5 1.5 Q9 -0.3 12.5 1 L13 3" stroke="#000" stroke-width="1.1" fill="none"/><rect x="11.5" y="2" width="2.5" height="2.5" fill="#000"/></svg>
<div style="left:335px;top:572px;width:383px;height:106px;border:1px solid #ffffff;box-sizing:border-box;"></div>
<div style="left:334px;top:571px;width:383px;height:106px;border:1px solid #808080;box-sizing:border-box;"></div>
<span class="t " style="left:345.90px;top:566px;font-size:12px;line-height:14px;color:#000;letter-spacing:0.515px;background:#d6d3ce;padding:0 4px;margin-left:-4px;">Банковские реквизиты</span>
<div style="left:352px;top:585px;width:349px;height:83px;background:#e6e4ea;box-shadow:inset 1px 1px #808080,inset -1px -1px #ffffff,inset 2px 2px #404040,inset -2px -2px #d6d3ce;"></div>
<div style="left:550px;top:697px;width:114px;height:21px;background:#d6d3ce;box-shadow:inset -1px -1px #404040,inset 1px 1px #ffffff,inset -2px -2px #808080,inset 2px 2px #d6d3ce;"></div>
<span class="t " style="left:598.64px;top:700px;font-size:12px;line-height:14px;color:#000;">OK</span>
<div style="left:673px;top:697px;width:113px;height:21px;background:#d6d3ce;box-shadow:inset -1px -1px #404040,inset 1px 1px #ffffff,inset -2px -2px #808080,inset 2px 2px #d6d3ce;"></div>
<span class="t " style="left:706.50px;top:700px;font-size:12px;line-height:14px;color:#000;transform:scaleX(1.0465);transform-origin:0 0;">Отмена</span>
<div style="left:6px;top:757px;width:109px;height:14px;background:#d6d3ce;box-shadow:inset 1px 1px #808080,inset -1px -1px #ffffff;"></div>
<div style="left:117px;top:757px;width:73px;height:14px;background:#d6d3ce;box-shadow:inset 1px 1px #808080,inset -1px -1px #ffffff;"></div>
<div style="left:192px;top:757px;width:89px;height:14px;background:#d6d3ce;box-shadow:inset 1px 1px #808080,inset -1px -1px #ffffff;"></div>
<div style="left:283px;top:757px;width:36px;height:14px;background:#d6d3ce;box-shadow:inset 1px 1px #808080,inset -1px -1px #ffffff;"></div>
<div style="left:321px;top:757px;width:37px;height:14px;background:#d6d3ce;box-shadow:inset 1px 1px #808080,inset -1px -1px #ffffff;"></div>
<div style="left:361px;top:757px;width:696px;height:14px;background:#d6d3ce;box-shadow:inset 1px 1px #808080,inset -1px -1px #ffffff;"></div>
<span class="t " style="left:7.90px;top:758px;font-size:12px;line-height:14px;color:#000;transform:scaleX(0.9238);transform-origin:0 0;">Запись: 1/1</span>
<span class="t " style="left:284.50px;top:758px;font-size:12px;line-height:14px;color:#000;transform:scaleX(0.8455);transform-origin:0 0;">&lt;OSC&gt;</span>
<span class="t " style="left:322.50px;top:758px;font-size:12px;line-height:14px;color:#000;transform:scaleX(0.8455);transform-origin:0 0;">&lt;DBG&gt;</span>
</body></html>
